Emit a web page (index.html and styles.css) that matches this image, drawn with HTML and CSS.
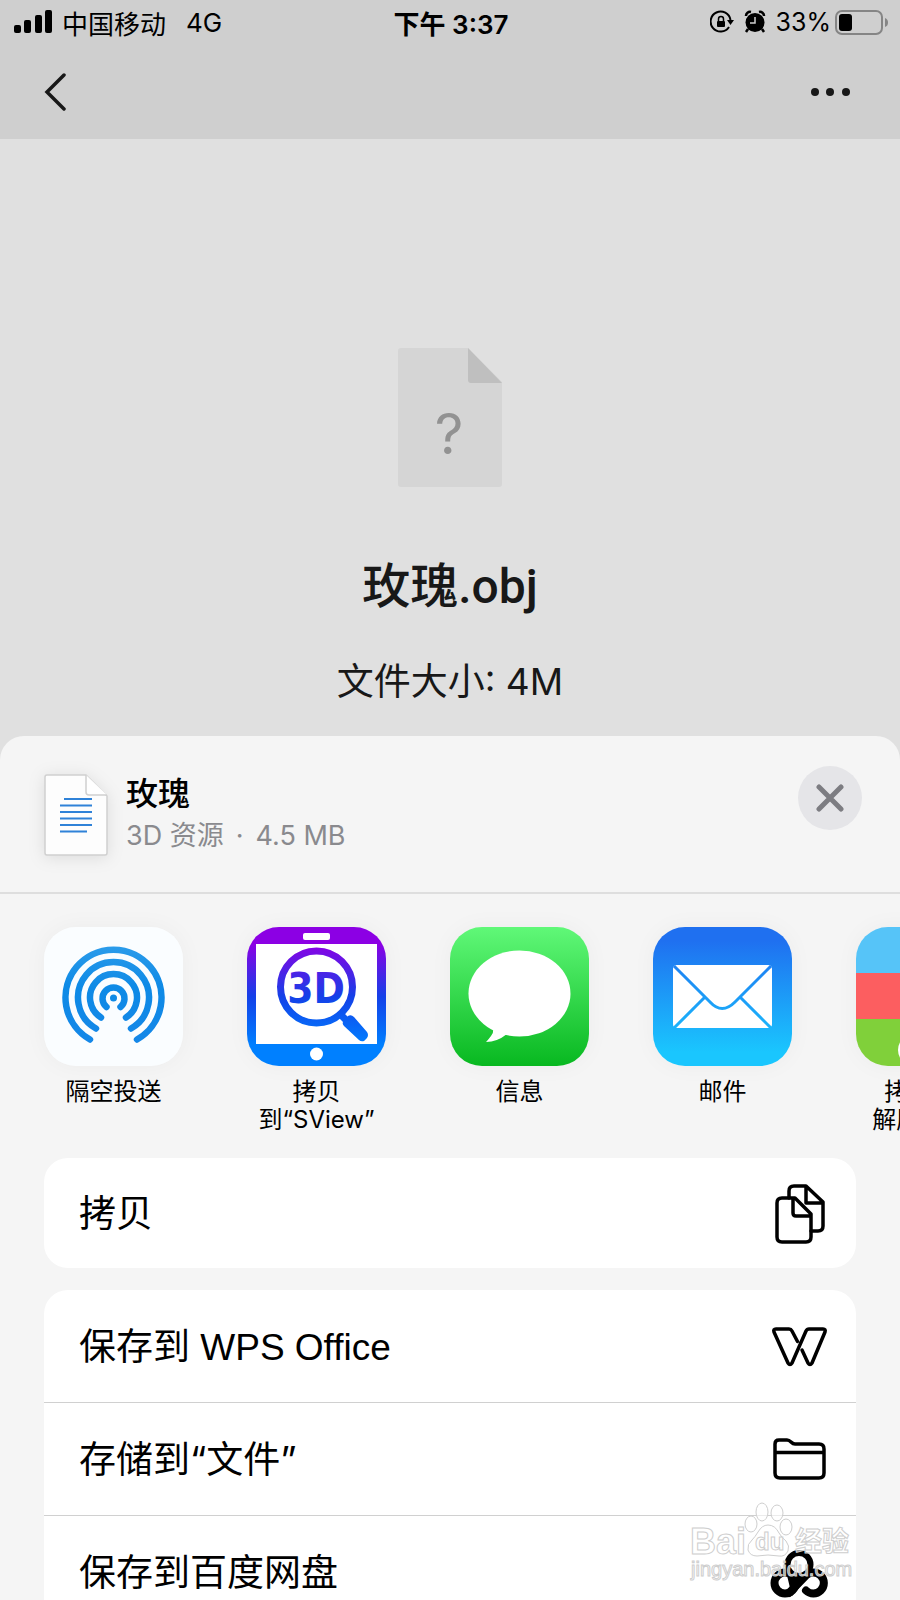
FILE: index.html
```html
<!DOCTYPE html>
<html lang="zh-CN">
  <head>
    <meta charset="UTF-8" />
    <meta name="viewport" content="width=device-width, initial-scale=1.0" />
    <title>玫瑰.obj</title>
    <link rel="stylesheet" href="styles.css">
  </head>
  <body>
    <!-- Top bar -->
    <header class="top">
      <div class="status">
        <div class="status-left">
          <svg class="signal" width="38" height="24" viewBox="0 0 38 24">
            <rect x="0" y="15" width="7" height="8" rx="2" />
            <rect x="10" y="10" width="7" height="13" rx="2" />
            <rect x="21" y="5" width="7" height="18" rx="2" />
            <rect x="31" y="0" width="7" height="23" rx="2" />
          </svg>
          <span>中国移动</span>
          <span class="network">4G</span>
        </div>
        <div class="status-time">下午 3:37</div>
        <div class="status-right">
          <svg width="24" height="24" viewBox="0 0 24 24">
            <path d="M19 17a10 10 0 1 1 1.500-7" fill="none" stroke="#000" stroke-width="2" />
            <path d="M17 10h7l-3.500 5z" />
            <rect x="7" y="11" width="8" height="6" rx="1" />
            <path d="M8.500 11V9a2.500 2.500 0 0 1 5 0v2" fill="none" stroke="#000" stroke-width="1.500" />
          </svg>
          <svg width="22" height="24" viewBox="0 0 22 24">
            <circle cx="11" cy="12.500" r="9.500" />
            <path d="M2 6a4 4 0 0 1 5-4M15 2a4 4 0 0 1 5 4M4 19l-2 3M18 19l2 3" fill="none" stroke="#000" stroke-width="2.500" />
            <path d="M11 7v6H6" fill="none" stroke="#cfcfcf" stroke-width="1.500" />
          </svg>
          <span>33%</span>
          <svg class="battery" width="53" height="26" viewBox="0 0 53 26">
            <rect x="1" y="2" width="46" height="23" rx="6" fill="none" stroke="#858585" stroke-width="2" />
            <rect x="4" y="5" width="13" height="17" rx="3" />
            <path d="M50 9q3 1 3 4.500t-3 4.500z" fill="#858585" />
          </svg>
        </div>
      </div>
      <nav class="nav">
        <button class="nav-btn" aria-label="返回">
          <svg width="22" height="38" viewBox="0 0 22 38">
            <path d="M20 2L3 19l17 17" fill="none" stroke="#181818" stroke-width="3.500" stroke-linecap="round" />
          </svg>
        </button>
        <button class="nav-btn" aria-label="更多">
          <svg width="40" height="10" viewBox="0 0 40 10" fill="#181818">
            <circle cx="4" cy="5" r="4" />
            <circle cx="19" cy="5" r="4" />
            <circle cx="35" cy="5" r="4" />
          </svg>
        </button>
      </nav>
    </header>

    <!-- File preview -->
    <main class="preview">
      <svg width="104" height="139" viewBox="0 0 104 139">
        <path d="M3 0h67l34 34v102a3 3 0 0 1-3 3H3a3 3 0 0 1-3-3V3a3 3 0 0 1 3-3z" fill="#d5d5d5" />
        <path d="M70 0l34 35H73a3 3 0 0 1-3-3z" fill="#bfbfbf" />
        <text class="unknown" x="51" y="106" text-anchor="middle">?</text>
      </svg>
      <h1>玫瑰.obj</h1>
      <p>文件大小: 4M</p>
    </main>

    <!-- Share sheet -->
    <section class="sheet">
      <header class="sheet-header">
        <svg class="thumb" width="64" height="82" viewBox="0 0 64 82">
          <path d="M3 1h39l21 21v57a2 2 0 0 1-2 2H3a2 2 0 0 1-2-2V3a2 2 0 0 1 2-2z" fill="#fdfdfd" stroke="#d0d0d0" stroke-width="1.500" />
          <path d="M42 1v17a3 3 0 0 0 3 3h18" fill="#fff" stroke="#d0d0d0" stroke-width="1.500" />
          <path d="M20 25h28M16 31.500h32M16 38h32M16 44.500h32M16 51h32M16 57.500h27" stroke="#2f82d8" stroke-width="2.200" />
        </svg>
        <div class="sheet-info">
          <h2>玫瑰</h2>
          <p>3D 资源<span class="dot">·</span>4.5 MB</p>
        </div>
        <button class="close" aria-label="关闭">
          <svg width="28" height="28" viewBox="0 0 28 28">
            <path d="M3 3l22 22M25 3L3 25" stroke="#7d7d82" stroke-width="5" stroke-linecap="round" />
          </svg>
        </button>
      </header>

      <div class="apps">
        <button class="app">
          <svg class="app-icon" viewBox="0 0 139 139">
            <defs>
              <linearGradient id="air" gradientUnits="userSpaceOnUse" x1="0" y1="20" x2="0" y2="120">
                <stop offset="0" stop-color="#2a9bea" />
                <stop offset="0.400" stop-color="#0e8ae6" />
                <stop offset="1" stop-color="#1587e8" />
              </linearGradient>
            </defs>
            <rect width="139" height="139" fill="#fafdff" />
            <circle cx="69.500" cy="71" r="3.500" fill="#0e8ae6" />
            <g fill="none" stroke="url(#air)" stroke-width="6.500" stroke-linecap="round">
              <path d="M62.500 80a11 11 0 1 1 14 0" />
              <path d="M57 90.500a23.500 23.500 0 1 1 25 0" />
              <path d="M52 101.500a35.500 35.500 0 1 1 35 0" />
              <path d="M46 112.500a48 48 0 1 1 47 0" />
            </g>
          </svg>
          <span>隔空投送</span>
        </button>
        <button class="app">
          <svg class="app-icon" viewBox="0 0 139 139">
            <defs>
              <linearGradient id="sview" gradientUnits="userSpaceOnUse" x1="0" y1="0" x2="0" y2="139">
                <stop offset="0.120" stop-color="#8c00e4" />
                <stop offset="0.500" stop-color="#1440e8" />
                <stop offset="0.850" stop-color="#0080ff" />
              </linearGradient>
            </defs>
            <rect width="139" height="139" fill="url(#sview)" />
            <rect x="56" y="6" width="27" height="7" rx="2" fill="#fff" />
            <rect x="9" y="17" width="121" height="100" fill="#fff" />
            <circle cx="69.500" cy="127" r="6.500" fill="#fff" />
            <circle cx="69.500" cy="60" r="36" fill="none" stroke="url(#sview)" stroke-width="7" />
            <path d="M92 86l7 7" stroke="url(#sview)" stroke-width="7" />
            <path d="M96 95l5-6q3-2 6 1l13 15q2 3 0 6l-3 3q-3 1-5-1L97 99q-2-2-1-4z" fill="url(#sview)" />
            <text class="sview-text" x="69" y="76" text-anchor="middle" fill="url(#sview)">3D</text>
          </svg>
          <span>拷贝<br>到“SView”</span>
        </button>
        <button class="app">
          <svg class="app-icon" viewBox="0 0 139 139">
            <defs>
              <linearGradient id="msg" x1="0" y1="0" x2="0" y2="1">
                <stop offset="0" stop-color="#60f878" />
                <stop offset="1" stop-color="#08b820" />
              </linearGradient>
            </defs>
            <rect width="139" height="139" fill="url(#msg)" />
            <ellipse cx="69.500" cy="66.500" rx="51" ry="43" fill="#fff" />
            <path d="M40 98q6 5 1 11-3 4-5 6 11 0 21-8z" fill="#fff" />
          </svg>
          <span>信息</span>
        </button>
        <button class="app">
          <svg class="app-icon" viewBox="0 0 139 139">
            <defs>
              <linearGradient id="mail" gradientUnits="userSpaceOnUse" x1="0" y1="0" x2="0" y2="139">
                <stop offset="0.100" stop-color="#1f70f0" />
                <stop offset="0.900" stop-color="#1ac6fe" />
              </linearGradient>
            </defs>
            <rect width="139" height="139" fill="url(#mail)" />
            <rect x="20" y="38" width="99" height="63" rx="4" fill="#fff" />
            <path d="M21 39l36 36q12 13 25 0l36-36M21 101l31-31M118 101L87 70" fill="none" stroke="url(#mail)" stroke-width="3" />
          </svg>
          <span>邮件</span>
        </button>
        <button class="app">
          <svg class="app-icon" viewBox="0 0 139 139">
            <rect width="139" height="47" fill="#56c4f8" />
            <rect y="46" width="139" height="47" fill="#fc5e60" />
            <rect y="92" width="139" height="47" fill="#80d03a" />
            <circle cx="58" cy="123" r="16" fill="#fff" />
          </svg>
          <span>拷贝到“<br>解压大师”</span>
        </button>
      </div>

      <div class="actions">
        <div class="card">
          <button class="row">
            <span>拷贝</span>
            <svg class="row-icon" viewBox="0 0 60 64">
              <path d="M19 17v-7q0-5 5-5h12l17 16v24q0 5-5 5h-7M36 5v17h17" />
              <path d="M12 17h13l16 16v23q0 5-5 5H12q-5 0-5-5V22q0-5 5-5zM23 17v15q0 3 3 3h15" />
            </svg>
          </button>
        </div>
        <div class="card">
          <button class="row">
            <span class="latin">保存到 WPS Office</span>
            <svg class="row-icon" viewBox="0 0 60 64">
              <path d="M27.500 27.500L22 17q-1-2-3-2H6q-3 0-2 3l14 31q2 3 4 0l14-32q1-2 3-2h14q3 0 2 3L42 49q-2 3-4 0l-6-13" />
            </svg>
          </button>
          <button class="row">
            <span>存储到“文件”</span>
            <svg class="row-icon" viewBox="0 0 60 64">
              <path d="M9 13h8q2 0 4 2 2 2 4 2h24q5 0 5 5v24q0 5-5 5H10q-5 0-5-5V17q0-4 4-4zM5 25.500h49" />
            </svg>
          </button>
          <button class="row">
            <span>保存到百度网盘</span>
            <svg class="row-icon cloud" viewBox="0 0 60 64">
              <path d="M16 30l10 4h8l8-2-20 23-2-8z" fill="#000" stroke="none" />
              <circle cx="29" cy="23.500" r="11.500" stroke-width="6" />
              <circle cx="15" cy="42" r="10.500" />
              <path d="M36 49.500a10.500 10.500 0 1 0 0-15L19 52" />
            </svg>
          </button>
        </div>
      </div>
    </section>

    <!-- Watermark over the last rows -->
    <svg class="watermark" width="164" height="84" viewBox="0 0 164 84">
      <text class="wm-big" x="2" y="54">Bai</text>
      <g class="wm-paw">
        <ellipse cx="74" cy="12" rx="6" ry="9" />
        <ellipse cx="89" cy="13" rx="6" ry="8" />
        <ellipse cx="63" cy="24" rx="6" ry="8" />
        <ellipse cx="98" cy="27" rx="6" ry="8" />
        <path d="M80 25q7 0 11 8 3 5 7 8 4 5 2 10-3 6-9 5-11-2-22 0-7 0-9-6-1-6 4-10 3-3 6-8 4-7 10-7z" />
      </g>
      <text class="wm-du" x="67" y="50">du</text>
      <text class="wm-cn" x="107" y="51">经验</text>
      <text class="wm-url" x="3" y="76">jingyan.baidu.com</text>
    </svg>
  </body>
</html>
```
FILE: styles.css
```css
* {
  margin: 0;
  padding: 0;
  box-sizing: border-box;
}

body {
  position: relative;
  display: flex;
  flex-direction: column;
  height: 100vh;
  overflow: hidden;
  background: #e0e0e0;
  color: #181818;
  font-family: Inter, 'Noto Sans CJK SC', sans-serif;
}

button {
  border: none;
  background: none;
  color: #000;
  font-family: inherit;
  cursor: pointer;
}

svg {
  display: block;
  flex-shrink: 0;
}

/* Top bar */
.top {
  flex-shrink: 0;
  height: 139px;
  background: #cfcfcf;
}

.status {
  display: grid;
  grid-template-columns: 1fr auto 1fr;
  align-items: center;
  height: 46px;
  padding: 0 12px 2px 14px;
  color: #000;
  font-size: 26px;
}

.status-left,
.status-right {
  display: flex;
  align-items: center;
  gap: 10px;
}

.status-right {
  justify-content: flex-end;
  font-size: 25px;
}

.network {
  margin-left: 10px;
}

.status-time {
  font-size: 26px;
  font-weight: 600;
}

.battery {
  margin-left: -6px;
}

.nav {
  display: flex;
  justify-content: space-between;
  align-items: center;
  height: 91px;
  padding: 0 49px 0 44px;
}

.nav-btn {
  display: flex;
  align-items: center;
  height: 44px;
}

/* File preview */
.preview {
  display: flex;
  flex-direction: column;
  align-items: center;
  flex-shrink: 0;
  height: 597px;
  padding-top: 209px;
}

.unknown {
  fill: #929292;
  font-size: 56px;
}

.preview h1 {
  margin-top: 64px;
  font-family: Roboto, 'Noto Sans CJK SC', sans-serif;
  font-size: 48px;
  font-weight: 500;
  line-height: 72px;
}

.preview p {
  margin-top: 32px;
  font-size: 37px;
  line-height: 54px;
}

/* Share sheet */
.sheet {
  flex-shrink: 0;
  background: #f5f5f5;
  border-radius: 24px 24px 0 0;
}

.sheet-header {
  display: flex;
  align-items: flex-start;
  height: 158px;
  padding: 30px 38px 0 44px;
  border-bottom: 2px solid #dedede;
}

.thumb {
  margin-top: 8px;
  filter: drop-shadow(0 2px 8px rgba(0, 0, 0, 0.1));
}

.sheet-info {
  flex: 1;
  margin: 6px 0 0 18px;
}

.sheet-info h2 {
  color: #000;
  font-size: 32px;
  font-weight: 500;
  line-height: 44px;
}

.sheet-info p {
  color: #8a8a8e;
  font-size: 27px;
  line-height: 40px;
}

.dot {
  margin: 0 12px;
}

.close {
  display: flex;
  align-items: center;
  justify-content: center;
  width: 64px;
  height: 64px;
  border-radius: 50%;
  background: #e5e5e8;
}

/* App row */
.apps {
  display: flex;
  gap: 64px;
  padding: 33px 0 24px 44px;
  overflow: hidden;
}

.app {
  display: flex;
  flex-direction: column;
  align-items: center;
  flex-shrink: 0;
  gap: 12px;
  width: 139px;
  font-size: 24px;
  line-height: 28px;
  white-space: nowrap;
}

.app-icon {
  width: 139px;
  height: 139px;
  border-radius: 32px;
  box-shadow: 0 0 24px rgba(0, 0, 0, 0.04);
}

.sview-text {
  font-family: 'DejaVu Sans Condensed', 'DejaVu Sans', sans-serif;
  font-size: 42px;
  font-weight: bold;
}

/* Actions */
.actions {
  display: flex;
  flex-direction: column;
  gap: 22px;
  padding: 0 44px;
}

.card {
  background: #fff;
  border-radius: 24px;
}

.row {
  display: flex;
  align-items: center;
  justify-content: space-between;
  width: 100%;
  height: 113px;
  padding: 0 26px 0 35px;
  font-size: 37px;
  border-bottom: 1px solid #d0d0d0;
}

.row span {
  padding-bottom: 5px;
}

.row .latin {
  font-family: 'Liberation Sans', 'Noto Sans CJK SC', sans-serif;
}

.row:last-child {
  border-bottom: none;
}

.row:only-child {
  height: 110px;
}

.row-icon {
  width: 60px;
  height: 64px;
  fill: none;
  stroke: #000;
  stroke-width: 3.5;
  stroke-linecap: round;
  stroke-linejoin: round;
}

.cloud {
  stroke-width: 8;
}

/* Watermark */
.watermark {
  position: absolute;
  right: 48px;
  bottom: 16px;
  pointer-events: none;
  fill: rgba(255, 255, 255, 0.6);
  stroke: #cecece;
  stroke-width: 1;
  font-family: 'Liberation Sans', 'Noto Sans CJK SC', sans-serif;
}

.wm-big {
  font-size: 36px;
  font-weight: bold;
}

.wm-du {
  font-size: 24px;
  font-weight: bold;
}

.wm-cn {
  font-size: 27px;
  font-weight: bold;
}

.wm-url {
  font-size: 20px;
}
```
